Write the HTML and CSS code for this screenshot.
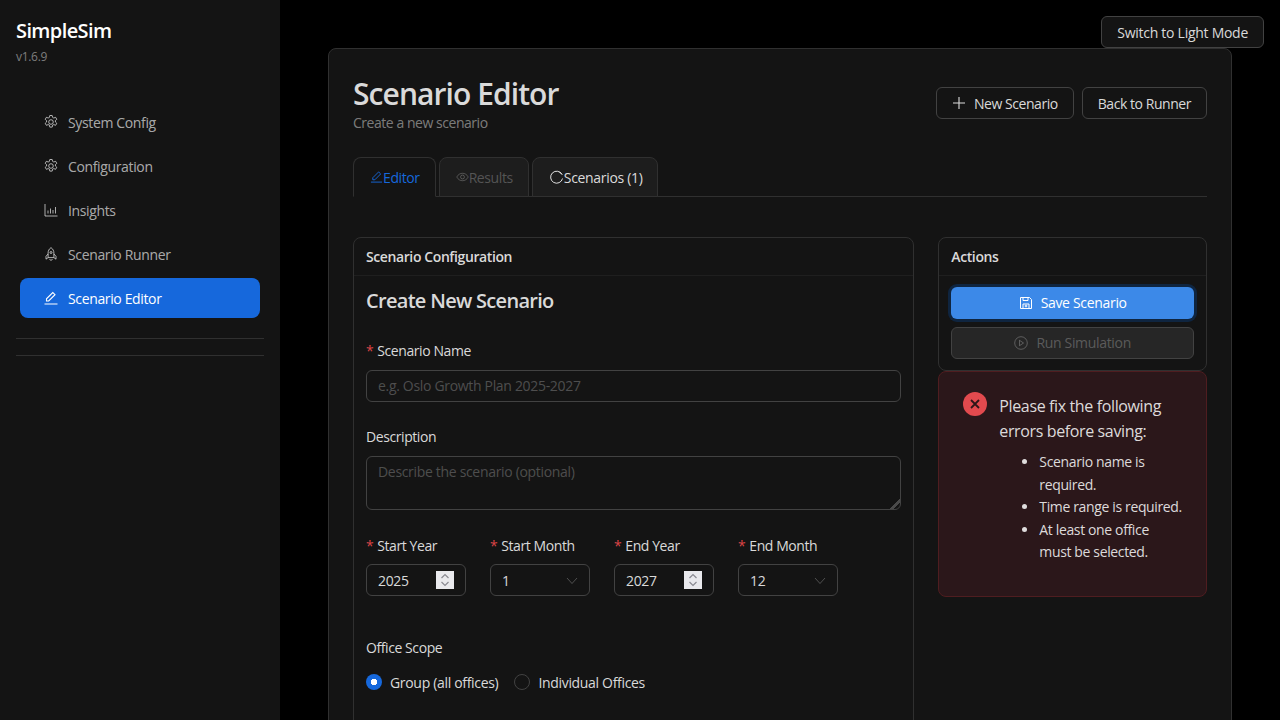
FILE: index.html
```html
<!DOCTYPE html>
<html lang="en">
<head>
    <meta charset="UTF-8">
    <title>SimpleSim - Scenario Editor</title>
    <link rel="stylesheet" href="styles.css">
</head>
<body>
    <div class="layout">
        <aside class="sidebar">
            <div class="brand">
                <div class="brand-name">SimpleSim</div>
                <div class="brand-version">v1.6.9</div>
            </div>
            <nav class="nav">
                <a class="nav-item">
                    <svg class="nav-icon" viewBox="1 1 14 14" fill="none" stroke="currentColor" stroke-width="1"><path d="M6.800 1.500h2.400l.4 1.900 1.200.6 1.800-.7 1.200 2-1.400 1.300v1.400l1.400 1.300-1.200 2-1.800-.7-1.200.6-.4 1.900H6.800l-.4-1.900-1.200-.6-1.800.7-1.200-2 1.400-1.300V6.600L2.200 5.300l1.200-2 1.800.7 1.200-.6z"/><circle cx="8" cy="8" r="2.300"/></svg>
                    System Config
                </a>
                <a class="nav-item">
                    <svg class="nav-icon" viewBox="1 1 14 14" fill="none" stroke="currentColor" stroke-width="1"><path d="M6.800 1.500h2.400l.4 1.900 1.200.6 1.800-.7 1.200 2-1.400 1.300v1.400l1.400 1.300-1.200 2-1.800-.7-1.200.6-.4 1.900H6.800l-.4-1.900-1.200-.6-1.800.7-1.200-2 1.400-1.300V6.600L2.200 5.300l1.200-2 1.800.7 1.200-.6z"/><circle cx="8" cy="8" r="2.300"/></svg>
                    Configuration
                </a>
                <a class="nav-item">
                    <svg class="nav-icon" viewBox="1 1 14 14" fill="none" stroke="currentColor" stroke-width="1"><path d="M2 2v12h12.500M5 11.500V8.500M7.500 11.500V6.500M10 11.500V8M12.500 11.500V5"/></svg>
                    Insights
                </a>
                <a class="nav-item">
                    <svg class="nav-icon" viewBox="0 0 14 14" fill="none" stroke="currentColor" stroke-width="1"><path d="M7 .6c2 1.400 2.900 3.300 2.900 5.400v4.600H4.100V6C4.100 3.900 5 2 7 .6zM4.100 7L2 9.300v2.900l2.100-1.600M9.900 7L12 9.300v2.900l-2.100-1.600M5.600 12.200c.3 1.400 2.500 1.400 2.800 0"/><circle cx="7" cy="5.500" r="1"/></svg>
                    Scenario Runner
                </a>
                <a class="nav-item active">
                    <svg class="nav-icon" viewBox="0 0 14 14" fill="none" stroke="currentColor" stroke-width="1.100"><path d="M2.500 10V7.800L8.800 1.500 11 3.700 4.700 10zM.5 13h13"/></svg>
                    Scenario Editor
                </a>
            </nav>
            <hr class="side-rule">
            <hr class="side-rule">
        </aside>
        <main class="main">
            <div class="topbar">
                <button class="btn">Switch to Light Mode</button>
            </div>
            <div class="panel">
                <div class="page-head">
                    <div class="page-title">
                        <h1>Scenario Editor</h1>
                        <p class="subtitle">Create a new scenario</p>
                    </div>
                    <div class="head-actions">
                        <button class="btn"><svg class="btn-icon" viewBox="0 0 14 14" fill="none" stroke="currentColor" stroke-width="1.100"><path d="M7 1v12M1 7h12"/></svg>New Scenario</button>
                        <button class="btn">Back to Runner</button>
                    </div>
                </div>
                <div class="tabs">
                    <div class="tab active"><svg class="tab-icon" viewBox="0 0 14 14" fill="none" stroke="currentColor" stroke-width="1"><path d="M3 10V7.800L9.300 1.500l2.200 2.200L5.200 10zM1 12.500h12"/></svg>Editor</div>
                    <div class="tab disabled"><svg class="tab-icon" viewBox="0 0 14 14" fill="none" stroke="currentColor" stroke-width="1"><path d="M.8 7C2.200 4.400 4.400 3 7 3s4.800 1.400 6.200 4c-1.400 2.600-3.600 4-6.200 4S2.200 9.600.8 7z"/><circle cx="7" cy="7" r="2.100"/></svg>Results</div>
                    <div class="tab tab-list"><svg class="tab-icon" viewBox="0 0 14 14" fill="none" stroke="currentColor" stroke-width="1"><path d="M12.500 4.500A6 6 0 1 0 13 8.500"/><path d="M10 1.800l2.600 2.800"/></svg>Scenarios (1)</div>
                </div>
                <div class="columns">
                    <section class="card config-card">
                        <div class="card-title">Scenario Configuration</div>
                        <div class="card-body">
                            <h2>Create New Scenario</h2>
                            <div class="field">
                                <label class="label"><span class="req">*</span>Scenario Name</label>
                                <input class="input" type="text" placeholder="e.g. Oslo Growth Plan 2025-2027">
                            </div>
                            <div class="field">
                                <label class="label">Description</label>
                                <textarea class="input textarea" placeholder="Describe the scenario (optional)"></textarea>
                            </div>
                            <div class="time-row">
                                <div>
                                    <label class="label"><span class="req">*</span>Start Year</label>
                                    <div class="small-input">2025<span class="spinner"><svg viewBox="0 0 18 18" fill="none" stroke="#8a8a92" stroke-width="1.200"><path d="M5.500 7L9 3.500 12.500 7M5.500 11L9 14.500 12.500 11"/></svg></span></div>
                                </div>
                                <div>
                                    <label class="label"><span class="req">*</span>Start Month</label>
                                    <div class="small-input">1<svg class="chevron" viewBox="0 0 12 12" fill="none" stroke="currentColor" stroke-width="1"><path d="M1 3l5 5.500L11 3"/></svg></div>
                                </div>
                                <div>
                                    <label class="label"><span class="req">*</span>End Year</label>
                                    <div class="small-input">2027<span class="spinner"><svg viewBox="0 0 18 18" fill="none" stroke="#8a8a92" stroke-width="1.200"><path d="M5.500 7L9 3.500 12.500 7M5.500 11L9 14.500 12.500 11"/></svg></span></div>
                                </div>
                                <div>
                                    <label class="label"><span class="req">*</span>End Month</label>
                                    <div class="small-input">12<svg class="chevron" viewBox="0 0 12 12" fill="none" stroke="currentColor" stroke-width="1"><path d="M1 3l5 5.500L11 3"/></svg></div>
                                </div>
                            </div>
                            <div class="scope">
                                <label class="label">Office Scope</label>
                                <div class="radios">
                                    <span class="radio checked"></span><span class="radio-text">Group (all offices)</span>
                                    <span class="radio"></span><span class="radio-text">Individual Offices</span>
                                </div>
                            </div>
                        </div>
                    </section>
                    <div class="side-col">
                        <section class="card">
                            <div class="card-title">Actions</div>
                            <div class="actions-body">
                                <button class="action primary"><svg class="btn-icon" viewBox="0 0 14 14" fill="none" stroke="currentColor" stroke-width="1"><path d="M1.500 1.500h9l2 2v9h-11zM4 1.500v3h5v-3M4 12.500V8h6v4.500"/><circle cx="7" cy="10" r=".9"/></svg>Save Scenario</button>
                                <button class="action muted"><svg class="btn-icon" viewBox="0 0 14 14" fill="none" stroke="currentColor" stroke-width="1"><circle cx="7" cy="7" r="6.300"/><path d="M5.500 4.300L9.500 7l-4 2.700z"/></svg>Run Simulation</button>
                            </div>
                        </section>
                        <section class="alert">
                            <span class="alert-icon"><svg viewBox="0 0 24 24" fill="none" stroke="#2c1618" stroke-width="1.800"><path d="M8 8l8 8M16 8l-8 8"/></svg></span>
                            <div class="alert-text">
                                <div class="alert-title">Please fix the following errors before saving:</div>
                                <ul>
                                    <li>Scenario name is required.</li>
                                    <li>Time range is required.</li>
                                    <li>At least one office must be selected.</li>
                                </ul>
                            </div>
                        </section>
                    </div>
                </div>
            </div>
        </main>
    </div>
</body>
</html>
```

FILE: styles.css
```css
* {
    box-sizing: border-box;
}
html, body {
    margin: 0;
    height: 720px;
    overflow: hidden;
}
body {
    font-family: "Open Sans", "Noto Sans", sans-serif;
    font-size: 14px;
    letter-spacing: -0.32px;
    background-color: #000;
    color: rgba(255, 255, 255, 0.85);
}
.layout {
    display: flex;
    height: 720px;
}
.sidebar {
    width: 280px;
    flex-shrink: 0;
    background-color: #141414;
}
.brand {
    padding: 16px 16px 0;
    height: 102px;
}
.brand-name {
    font-size: 20px;
    font-weight: 600;
    line-height: 30px;
    letter-spacing: -0.6px;
    color: #fff;
}
.brand-version {
    font-size: 12px;
    line-height: 20px;
    margin-top: 1px;
    letter-spacing: -0.3px;
    color: rgba(255, 255, 255, 0.45);
}
.nav {
    display: flex;
    flex-direction: column;
    gap: 4px;
    padding: 0 20px;
    letter-spacing: -0.36px;
}
.nav-item {
    display: flex;
    align-items: center;
    gap: 10px;
    height: 40px;
    padding-left: 24px;
    border-radius: 8px;
    color: rgba(255, 255, 255, 0.65);
}
.nav-item.active {
    background-color: #1668dc;
    color: #fff;
}
.nav-icon {
    width: 14px;
    height: 14px;
}
.side-rule {
    margin: 0 16px;
    border: 0;
    border-top: 1px solid #303030;
}
.side-rule:first-of-type {
    margin-top: 20px;
    margin-bottom: 16px;
}
.main {
    flex: 1;
    padding: 16px 16px 0 48px;
}
.topbar {
    display: flex;
    justify-content: flex-end;
    height: 32px;
    letter-spacing: -0.27px;
}
.btn {
    display: inline-flex;
    align-items: center;
    height: 32px;
    padding: 0 15px;
    border: 1px solid #424242;
    border-radius: 6px;
    background-color: #141414;
    color: rgba(255, 255, 255, 0.85);
    font: inherit;
    letter-spacing: inherit;
}
.btn-icon {
    width: 14px;
    height: 14px;
    margin-right: 8px;
}
.panel {
    width: 904px;
    height: 800px;
    background-color: #141414;
    border: 1px solid #303030;
    border-radius: 8px;
    padding: 24px;
}
.page-head {
    display: flex;
    justify-content: space-between;
    align-items: flex-start;
    height: 60px;
}
.page-title {
    margin-top: 2px;
}
h1 {
    margin: 0;
    font-size: 30px;
    font-weight: 600;
    line-height: 38px;
    letter-spacing: -0.93px;
}
.subtitle {
    margin: -1px 0 0;
    font-size: 14px;
    line-height: 22px;
    letter-spacing: -0.46px;
    color: rgba(255, 255, 255, 0.45);
}
.head-actions {
    display: flex;
    gap: 8px;
    margin-top: 14px;
    letter-spacing: -0.45px;
}
.tabs {
    display: flex;
    gap: 3px;
    margin-top: 24px;
    height: 40px;
    border-bottom: 1px solid #303030;
    letter-spacing: -0.4px;
}
.tab {
    display: flex;
    align-items: center;
    height: 40px;
    padding: 0 15px 0 16px;
    background-color: #1d1d1d;
    border: 1px solid #303030;
    border-radius: 8px 8px 0 0;
}
.tab.active {
    background-color: #141414;
    border-bottom-color: #141414;
    color: #1668dc;
}
.tab.disabled {
    color: rgba(255, 255, 255, 0.25);
}
.tab-icon {
    width: 13px;
    height: 14px;
}
.tab-list {
    letter-spacing: -0.32px;
}
.tab-list .tab-icon {
    width: 15px;
}
.columns {
    display: flex;
    gap: 24px;
    margin-top: 40px;
}
.card {
    background-color: #141414;
    border: 1px solid #303030;
    border-radius: 8px;
}
.config-card {
    width: 562px;
    height: 600px;
}
.card-title {
    height: 38px;
    padding: 0 12px;
    display: flex;
    align-items: center;
    font-weight: 600;
    letter-spacing: -0.4px;
    border-bottom: 1px solid #1f1f1f;
}
.card-body {
    padding: 11px 12px 12px;
}
h2 {
    margin: 0 0 25px;
    font-size: 20px;
    font-weight: 600;
    line-height: 28px;
    letter-spacing: -0.7px;
}
.field {
    margin-bottom: 24px;
}
.label {
    display: block;
    line-height: 22px;
    margin-bottom: 8px;
    letter-spacing: -0.42px;
}
.req {
    color: #dc4446;
    margin-right: 4px;
}
.input {
    display: block;
    width: 100%;
    height: 32px;
    padding: 3px 11px 5px;
    background: transparent;
    border: 1px solid #424242;
    border-radius: 6px;
    color: inherit;
    font: inherit;
    letter-spacing: inherit;
    outline: none;
}
.input::placeholder {
    color: rgba(255, 255, 255, 0.25);
}
.textarea {
    height: 54px;
    padding-top: 5px;
    resize: vertical;
}
.textarea::-webkit-resizer {
    background: linear-gradient(135deg, transparent 65%, #4a4a4a 65%, #4a4a4a 80%, transparent 80%);
}
.time-row {
    display: flex;
    gap: 24px;
}
.time-row .label {
    padding-top: 1px;
    margin-bottom: 7px;
}
.small-input {
    position: relative;
    display: flex;
    align-items: center;
    width: 100px;
    height: 32px;
    padding: 0 11px;
    border: 1px solid #424242;
    border-radius: 6px;
}
.spinner {
    position: absolute;
    right: 11px;
    top: 6px;
    width: 18px;
    height: 18px;
    background-color: #e9e9ed;
}
.spinner svg {
    display: block;
}
.chevron {
    position: absolute;
    right: 11px;
    top: 10px;
    width: 12px;
    height: 12px;
    color: rgba(255, 255, 255, 0.25);
}
.scope {
    margin-top: 41px;
}
.radios {
    display: flex;
    align-items: flex-start;
    margin-top: 15px;
}
.radio {
    width: 16px;
    height: 16px;
    border-radius: 50%;
    border: 1px solid #424242;
}
.radio.checked {
    border: 0;
    background: radial-gradient(circle, #fff 0 3px, #1668dc 3.500px);
}
.radio-text {
    padding: 0 16px 0 8px;
    line-height: 18px;
}
.side-col {
    width: 269px;
}
.actions-body {
    display: flex;
    flex-direction: column;
    gap: 8px;
    padding: 11px 12px;
}
.action {
    display: flex;
    align-items: center;
    justify-content: center;
    height: 32px;
    padding-bottom: 2px;
    border-radius: 6px;
    font: inherit;
    letter-spacing: inherit;
}
.action.primary {
    background-color: #3c89e8;
    border: 0;
    color: #fff;
    box-shadow: 0 0 0 3px #0f2540;
}
.action.muted {
    background-color: #262626;
    border: 1px solid #424242;
    color: rgba(255, 255, 255, 0.25);
}
.alert {
    display: flex;
    gap: 12px;
    padding: 20px 23px 20px 24px;
    height: 226px;
    background-color: #2b171a;
    border: 1px solid #4f1d20;
    border-radius: 8px;
}
.alert-icon {
    flex-shrink: 0;
    width: 24px;
    height: 24px;
    border-radius: 50%;
    background-color: #e24a4e;
}
.alert-title {
    font-size: 16px;
    line-height: 25px;
    margin-top: 2px;
    letter-spacing: -0.37px;
}
.alert ul {
    margin: 7px 0 0;
    padding-left: 40px;
    line-height: 22.500px;
    letter-spacing: -0.36px;
}
```
